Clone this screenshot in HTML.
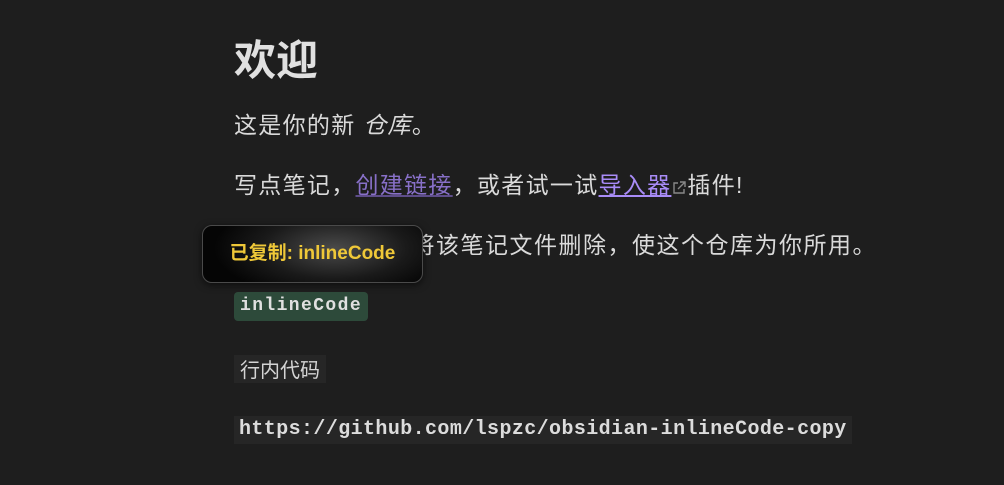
<!DOCTYPE html>
<html><head><meta charset="utf-8"><style>
html,body{margin:0;padding:0;background:#1e1e1e;width:1004px;height:485px;overflow:hidden}
body{font-family:"Liberation Sans","Noto Sans CJK SC",sans-serif;color:#dadada;position:relative}
.l{position:absolute;left:234px;white-space:nowrap;font-size:23px;letter-spacing:1.3px;line-height:30px}
h1{position:absolute;left:234px;top:33px;margin:0;font-size:42px;font-weight:bold;color:#e0e0e0;line-height:50px;font-family:"Noto Sans CJK SC",sans-serif}
.a1{color:#8870c8;text-decoration:underline;text-decoration-color:#5e4d8a}
.a2{color:#a98cf8;text-decoration:underline}
.ext{display:inline-block;vertical-align:-2px;margin:0 1px}
code{font-family:"Liberation Mono","DejaVu Sans Mono",monospace}
.ic{position:absolute;left:234px;top:292px;background:#2d4a3a;color:#e0e0e0;border-radius:4px;padding:0 6px;height:29px;line-height:29px;font-size:18px;letter-spacing:1.4px;font-weight:bold}
.zh{position:absolute;left:234px;top:355px;background:#262626;color:#d4d4d4;padding:0 6px;height:28px;line-height:28px;font-size:20px;font-family:"Noto Sans CJK SC",sans-serif}
.url{position:absolute;left:234px;top:416px;background:#262626;color:#dcdcdc;padding:0 5px;height:28px;line-height:28px;font-size:20px;letter-spacing:0.4px;font-weight:bold}
.toast{position:absolute;left:202px;top:225px;width:219px;height:56px;border-radius:10px;border:1px solid #4a4a4a;background:radial-gradient(ellipse 55% 90% at 60% 40%,#4a4a4a 0%,#1a1a1a 60%,#050505 100%);box-shadow:0 2px 8px rgba(0,0,0,.6);color:#efc838;font-weight:bold;font-size:19px;text-align:center;line-height:56px;font-family:"Liberation Sans","Noto Sans CJK SC",sans-serif}
</style></head><body>
<h1>欢迎</h1>
<div class="l" style="top:110px">这是你的新 <i>仓库</i>。</div>
<div class="l" style="top:170px">写点笔记，<span class="a1">创建链接</span>，或者试一试<span class="a2">导入器</span><svg class="ext" width="14" height="14" viewBox="0 0 14 14" fill="none" stroke="#888" stroke-width="1.4"><path d="M6 2H2v10h10V8M8 1h5v5M13 1L6 8"/></svg>插件!</div>
<div class="l" style="top:230px;left:240px;letter-spacing:1.5px">当你准备好时，将该笔记文件删除，使这个仓库为你所用。</div>
<div class="toast">已复制: inlineCode</div>
<code class="ic">inlineCode</code>
<div class="zh">行内代码</div>
<code class="url">https://github.com/lspzc/obsidian-inlineCode-copy</code>
</body></html>
